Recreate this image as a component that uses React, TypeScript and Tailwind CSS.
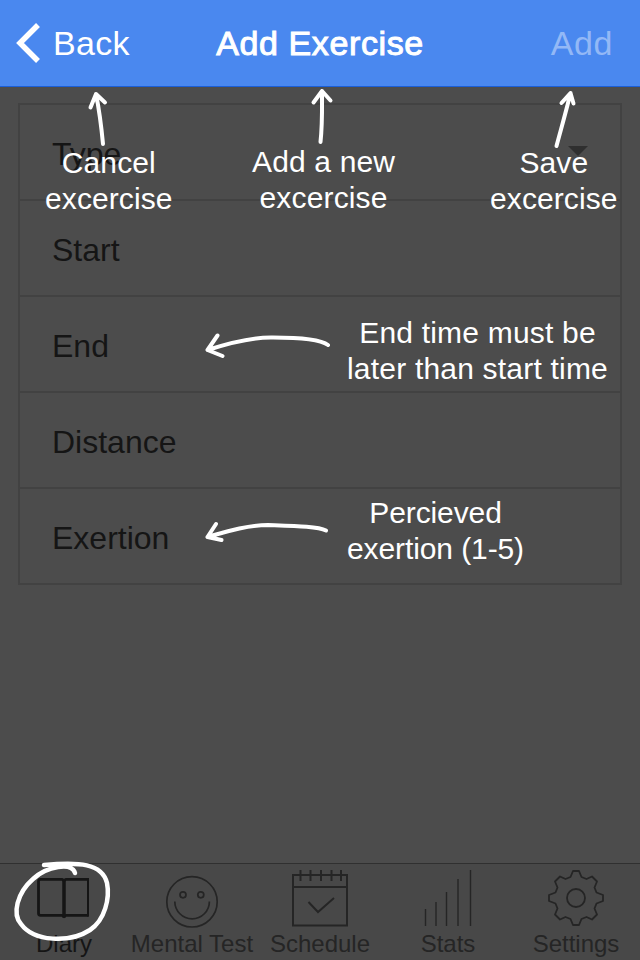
import type { ReactNode } from "react";

const rows = ["Type", "Start", "End", "Distance", "Exertion"];

function TabItem({ label, dark, children }: { label: string; dark?: boolean; children: ReactNode }) {
  return (
    <div className={`flex w-32 flex-col items-center ${dark ? "text-[#151515]" : "text-[#252525]"}`}>
      <div className="h-[66px] w-32">{children}</div>
      <span className="whitespace-nowrap text-2xl leading-[28px]">{label}</span>
    </div>
  );
}

const iconProps = {
  width: 128,
  height: 66,
  fill: "none",
  stroke: "currentColor",
  strokeWidth: 2,
};

function Note({ className, lines }: { className: string; lines: string[] }) {
  return (
    <div className={`absolute whitespace-nowrap text-center text-[30px] leading-[36px] text-white ${className}`}>
      {lines.map((l) => (
        <div key={l}>{l}</div>
      ))}
    </div>
  );
}

export default function App() {
  return (
    <div className="relative flex h-[960px] w-[640px] flex-col overflow-hidden bg-[#4c4c4c] font-['Liberation_Sans',Arial,sans-serif]">
      <header className="grid h-[87px] shrink-0 grid-cols-[1fr_auto_1fr] items-center border-b border-[#1a5fd8] bg-[#4a88ef] text-[34px] leading-none text-white">
        <div className="flex items-center pl-4">
          <svg width="26" height="42" viewBox="0 0 26 42" fill="none" stroke="currentColor" strokeWidth="5.5">
            <path d="M22 3 4 21 22 39" />
          </svg>
          <span className="ml-[11px] tracking-[0.3px]">Back</span>
        </div>
        <h1 className="tracking-[0.6px] [-webkit-text-stroke:1px_white]">Add Exercise</h1>
        <span className="pr-[27px] text-right tracking-[0.6px] text-[#93b8f6]">Add</span>
      </header>

      <main className="flex-1 px-[18px] pt-4">
        <div className="w-[604px] divide-y-2 divide-[#424242] border-2 border-[#424242]">
          {rows.map((r) => (
            <div key={r} className="flex h-24 items-center justify-between pl-8 pr-8 text-[32px] text-[#151515] last:h-[94px]">
              <span className="pt-1">{r}</span>
              {r === "Type" && (
                <svg className="-mt-[2px]" width="20" height="10" viewBox="0 0 20 10" fill="#2f2f2f">
                  <path d="M0 0h20L10 10z" />
                </svg>
              )}
            </div>
          ))}
        </div>
      </main>

      <nav className="flex h-[97px] shrink-0 border-t border-[#303030] bg-[#484848]">
        <TabItem label="Diary" dark>
          <svg {...iconProps} viewBox="0 864 128 66">
            <path strokeWidth="2.800" d="M64 880.500 62 879.300H40.500q-2 0-2 2v32q0 2 2 2h21.500l2 1.200 2-1.200h22.500M64 880.500l2-1.200h22.500" />
            <path strokeWidth="2" d="M88 878v38.500" />
            <path strokeWidth="3.500" d="M64 880v37.500" />
          </svg>
        </TabItem>
        <TabItem label="Mental Test">
          <svg {...iconProps} viewBox="128 864 128 66" strokeWidth={1.7}>
            <circle cx="192" cy="901.800" r="25.200" />
            <circle cx="183" cy="894.800" r="3" />
            <circle cx="200.800" cy="894.800" r="3" />
            <path d="M174.800 901.500a17.300 17.300 0 0 0 34.600 0" />
          </svg>
        </TabItem>
        <TabItem label="Schedule">
          <svg {...iconProps} viewBox="256 864 128 66">
            <path d="M293 875h54v50.500h-54zM293 887h54M300.500 870v11M310.500 870v11M321 870v11M331.500 870v11M341 870v11M308.500 902l9.500 10 16-14" />
          </svg>
        </TabItem>
        <TabItem label="Stats">
          <svg {...iconProps} viewBox="384 864 128 66" strokeWidth={1.4}>
            <path d="M425.500 909v17M436 902v24M446.500 892v34M458 879v47M470.500 870v56" />
          </svg>
        </TabItem>
        <TabItem label="Settings">
          <svg {...iconProps} viewBox="512 864 128 66" strokeWidth={1.8} strokeLinejoin="round">
            <circle cx="576" cy="898" r="9" />
            <path d="M573 871h6l2.500 6 5 2 5.500-2.500 5 5-2.500 6 2 5 6.500 2.500v6l-6.500 2.500-2 5 2.500 6-5 5-5.500-2.500-5 2-2.500 6h-6l-2.500-6-5-2-5.500 2.500-5-5 2.500-6-2-5-6.500-2.500v-6l6.500-2.500 2-5-2.500-6 5-5 5.500 2.500 5-2z" />
          </svg>
        </TabItem>
      </nav>

      <Note className="left-[45px] top-[145px] tracking-[0.1px]" lines={["Cancel", "excercise"]} />
      <Note className="left-[252px] top-[144px] tracking-[0.15px]" lines={["Add a new", "excercise"]} />
      <Note className="left-[490px] top-[145px] tracking-[0.1px]" lines={["Save", "excercise"]} />
      <Note className="left-[347px] top-[315px] tracking-[0.2px]" lines={["End time must be", "later than start time"]} />
      <Note className="left-[347px] top-[495px] tracking-[-0.1px]" lines={["Percieved", "exertion (1-5)"]} />

      <svg
        className="absolute inset-0"
        width="640"
        height="960"
        fill="none"
        stroke="white"
        strokeWidth="4"
        strokeLinecap="round"
        strokeLinejoin="round"
      >
        <path d="M103 144C101.500 128 99 109 96 94M90.500 107.500 96 94l9 8.500" />
        <path d="M320.500 142C322.500 124 322 108 322 91M313.500 102.500 322 91l8.500 9.500" />
        <path d="M556.500 146C561 129 566 112 570.500 93M561.500 103 570.500 93l3 10.500" />
        <path d="M328 345C320 339 300 337.500 273 337.500 250 337 226 344 207.500 350M217.500 335.500 207.500 350l15 6" />
        <path d="M326 530.500C318 526.500 295 526 268 525 247 525 225 532 207.500 537M216 524 207.500 537l14 3" />
        <path strokeWidth="4.500" d="M75 873C72 862 47 866 33 879 17 893 12 914 21 924 34 942 70 943 90 930 105 920 110 898 107 883 102 863 79 862 44 865" />
      </svg>
    </div>
  );
}
